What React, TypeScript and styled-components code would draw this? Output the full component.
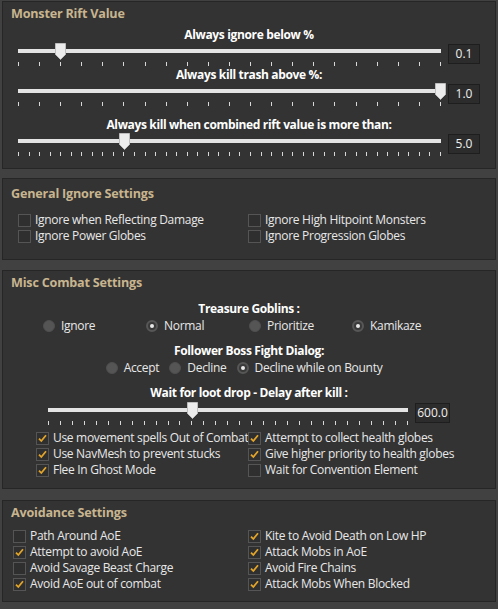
import React from "react";
import styled, { createGlobalStyle } from "styled-components";

const Global = createGlobalStyle`
  html, body { margin: 0; padding: 0; background: #414141; }
  body {
    font-family: "Open Sans", "Noto Sans", sans-serif;
    font-size: 12px;
    letter-spacing: -0.3px;
    color: #e6e6e6;
    width: 498px;
    height: 609px;
    overflow: hidden;
  }
`;

const Page = styled.div`
  display: flex;
  flex-direction: column;
  padding: 1px 2px 0 2px;
`;

const Panel = styled.section<{ $mt: number; $h: number; $pt: number }>`
  box-sizing: border-box;
  margin-top: ${(p) => p.$mt}px;
  height: ${(p) => p.$h}px;
  padding-top: ${(p) => p.$pt}px;
  background: #333333;
  border: 1px solid #262626;
  display: flex;
  flex-direction: column;
`;

const Title = styled.div`
  font-weight: 700;
  font-size: 12.6px;
  letter-spacing: -0.2px;
  line-height: 16px;
  color: #c8b58f;
  margin-left: 8px;
`;

const CenterLabel = styled.div<{ $mt: number }>`
  margin-top: ${(p) => p.$mt}px;
  text-align: center;
  font-weight: 700;
  letter-spacing: -0.35px;
  line-height: 16px;
  color: #ffffff;
`;

const SliderLine = styled.div<{ $ml: number; $mt?: number }>`
  display: flex;
  align-items: flex-start;
  margin-left: ${(p) => p.$ml}px;
  margin-top: ${(p) => p.$mt ?? 0}px;
  height: 23px;
`;

const TrackArea = styled.div<{ $w: number }>`
  position: relative;
  width: ${(p) => p.$w}px;
  height: 23px;
  display: flex;
  flex-direction: column;
`;

const Track = styled.div`
  margin-top: 6px;
  height: 4px;
  background: #e4e4e4;
`;

const Ticks = styled.div`
  margin-top: 9px;
  height: 4px;
  display: flex;
  justify-content: space-between;
`;

const Tick = styled.span`
  width: 1px;
  height: 4px;
  background: #d8d8d8;
`;

const Thumb = styled.svg`
  position: absolute;
  top: 0;
  width: 11px;
  height: 17px;
`;

const ValueBox = styled.div<{ $w: number }>`
  box-sizing: border-box;
  margin-left: 7px;
  margin-top: 1px;
  width: ${(p) => p.$w}px;
  height: 20px;
  background: #2c2c2c;
  border: 1px solid #1e1e1e;
  color: #f0f0f0;
  text-align: center;
  line-height: 18px;
  letter-spacing: 0;
`;

const CheckGrid = styled.div<{ $pl: number; $col: number; $mt: number }>`
  display: grid;
  grid-template-columns: ${(p) => p.$col}px ${(p) => p.$col}px;
  grid-auto-rows: 16px;
  padding-left: ${(p) => p.$pl}px;
  margin-top: ${(p) => p.$mt}px;
`;

const CheckItem = styled.label`
  display: flex;
  align-items: center;
  gap: 4px;
  white-space: nowrap;
  line-height: 16px;
  color: #e8e8e8;
`;

const Box = styled.span`
  box-sizing: border-box;
  flex: none;
  width: 13px;
  height: 13px;
  border: 1px solid #555555;
  background: #2f2f2f;
  display: flex;
  align-items: center;
  justify-content: center;
`;

const RadioGrid = styled.div<{ $mt: number }>`
  display: grid;
  grid-template-columns: repeat(4, 103px);
  justify-content: center;
  margin-top: ${(p) => p.$mt}px;
  height: 16px;
`;

const RadioRow = styled.div<{ $mt: number }>`
  display: flex;
  justify-content: center;
  margin-top: ${(p) => p.$mt}px;
  height: 16px;
`;

const RadioItem = styled.label<{ $mr?: number }>`
  display: flex;
  align-items: center;
  gap: 6px;
  white-space: nowrap;
  line-height: 16px;
  color: #e8e8e8;
  margin-right: ${(p) => p.$mr ?? 0}px;
`;

const Dot = styled.span<{ $on: boolean }>`
  box-sizing: border-box;
  flex: none;
  width: 12px;
  height: 12px;
  border-radius: 50%;
  background: ${(p) => (p.$on ? "#3a3a3a" : "#555555")};
  border: ${(p) => (p.$on ? "2px solid #575757" : "1px solid #4f4f4f")};
  display: flex;
  align-items: center;
  justify-content: center;
  &::after {
    content: "";
    display: ${(p) => (p.$on ? "block" : "none")};
    width: 4px;
    height: 4px;
    border-radius: 50%;
    background: #e8e8e8;
  }
`;

function Slider({
  ml,
  mt,
  width,
  min,
  max,
  value,
  ticks,
  boxW,
  text,
}: {
  ml: number;
  mt?: number;
  width: number;
  min: number;
  max: number;
  value: number;
  ticks: number;
  boxW: number;
  text: string;
}) {
  const frac = (value - min) / (max - min);
  const left = frac * (width - 1) - 5;
  return (
    <SliderLine $ml={ml} $mt={mt}>
      <TrackArea $w={width}>
        <Track />
        <Ticks>
          {Array.from({ length: ticks + 1 }).map((_, i) => (
            <Tick key={i} />
          ))}
        </Ticks>
        <Thumb viewBox="0 0 11 17" style={{ left }}>
          <path d="M0.5 0.5 H10.5 V11.5 L5.5 16.5 L0.5 11.5 Z" fill="#ececec" stroke="#bdbdbd" strokeWidth="1" />
        </Thumb>
      </TrackArea>
      <ValueBox $w={boxW}>{text}</ValueBox>
    </SliderLine>
  );
}

function Check({ label, on }: { label: string; on?: boolean }) {
  return (
    <CheckItem>
      <Box>
        {on && (
          <svg width="11" height="11" viewBox="0 0 11 11">
            <path d="M2 5.6 L4.3 8 L9 2.3" fill="none" stroke="#e2a52a" strokeWidth="1.8" />
          </svg>
        )}
      </Box>
      {label}
    </CheckItem>
  );
}

function Radio({ label, on, mr }: { label: string; on?: boolean; mr?: number }) {
  return (
    <RadioItem $mr={mr}>
      <Dot $on={!!on} />
      {label}
    </RadioItem>
  );
}

export default function App() {
  return (
    <>
      <Global />
      <Page>
        <Panel $mt={0} $h={168} $pt={4}>
          <Title>Monster Rift Value</Title>
          <CenterLabel $mt={5}>Always ignore below %</CenterLabel>
          <Slider ml={15} width={423} min={0} max={1} value={0.1} ticks={20} boxW={32} text="0.1" />
          <CenterLabel $mt={1}>Always kill trash above %:</CenterLabel>
          <Slider ml={15} width={423} min={0} max={1} value={1} ticks={20} boxW={32} text="1.0" />
          <CenterLabel $mt={11}>Always kill when combined rift value is more than:</CenterLabel>
          <Slider ml={15} width={423} min={0} max={20} value={5} ticks={40} boxW={32} text="5.0" />
        </Panel>

        <Panel $mt={9} $h={82} $pt={7}>
          <Title>General Ignore Settings</Title>
          <CheckGrid $pl={15} $col={230} $mt={10}>
            <Check label="Ignore when Reflecting Damage" />
            <Check label="Ignore High Hitpoint Monsters" />
            <Check label="Ignore Power Globes" />
            <Check label="Ignore Progression Globes" />
          </CheckGrid>
        </Panel>

        <Panel $mt={10} $h={219} $pt={4}>
          <Title>Misc Combat Settings</Title>
          <CenterLabel $mt={10}>Treasure Goblins :</CenterLabel>
          <RadioGrid $mt={1}>
            <Radio label="Ignore" />
            <Radio label="Normal" on />
            <Radio label="Prioritize" />
            <Radio label="Kamikaze" on />
          </RadioGrid>
          <CenterLabel $mt={9}>Follower Boss Fight Dialog:</CenterLabel>
          <RadioRow $mt={1}>
            <Radio label="Accept" mr={10} />
            <Radio label="Decline" mr={10} />
            <Radio label="Decline while on Bounty" on mr={10} />
          </RadioRow>
          <CenterLabel $mt={9}>Wait for loot drop - Delay after kill :</CenterLabel>
          <Slider ml={45} mt={1} width={360} min={0} max={1500} value={600} ticks={30} boxW={35} text="600.0" />
          <CheckGrid $pl={33} $col={212} $mt={5}>
            <Check label="Use movement spells Out of Combat" on />
            <Check label="Attempt to collect health globes" on />
            <Check label="Use NavMesh to prevent stucks" on />
            <Check label="Give higher priority to health globes" on />
            <Check label="Flee In Ghost Mode" on />
            <Check label="Wait for Convention Element" />
          </CheckGrid>
        </Panel>

        <Panel $mt={11} $h={102} $pt={4}>
          <Title>Avoidance Settings</Title>
          <CheckGrid $pl={10} $col={235} $mt={7}>
            <Check label="Path Around AoE" />
            <Check label="Kite to Avoid Death on Low HP" on />
            <Check label="Attempt to avoid AoE" on />
            <Check label="Attack Mobs in AoE" on />
            <Check label="Avoid Savage Beast Charge" />
            <Check label="Avoid Fire Chains" on />
            <Check label="Avoid AoE out of combat" on />
            <Check label="Attack Mobs When Blocked" on />
          </CheckGrid>
        </Panel>
      </Page>
    </>
  );
}
